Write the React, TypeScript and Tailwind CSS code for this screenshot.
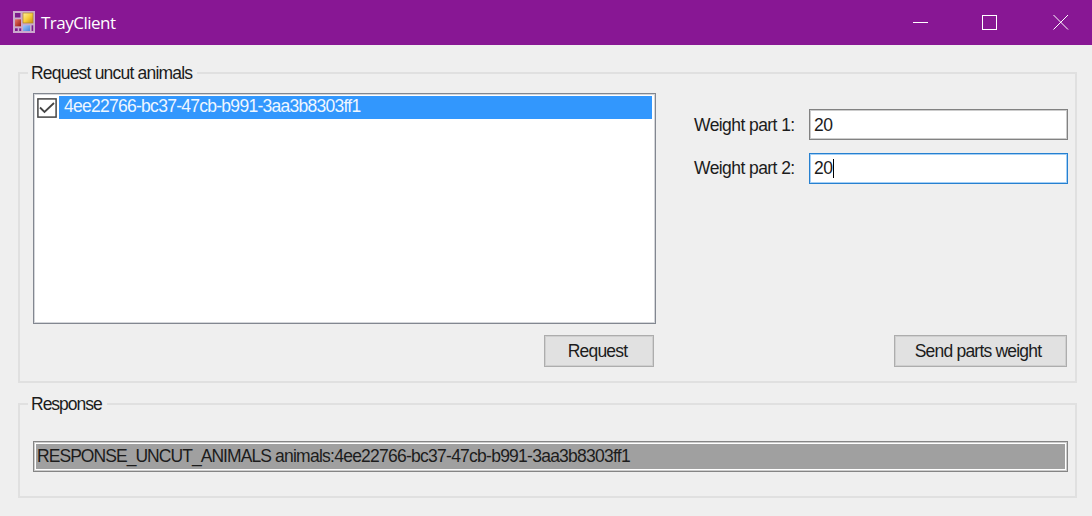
import React from 'react';

const FormIcon = () => (
  <svg width="22" height="22" viewBox="0 0 22 22" className="shrink-0">
    <defs>
      <linearGradient id="gold" x1="0" y1="0" x2="1" y2="1">
        <stop offset="0" stopColor="#fff0a0" />
        <stop offset="0.5" stopColor="#f7cf3c" />
        <stop offset="1" stopColor="#c98c12" />
      </linearGradient>
      <linearGradient id="red" x1="0" y1="0" x2="1" y2="1">
        <stop offset="0" stopColor="#e87868" />
        <stop offset="1" stopColor="#98180c" />
      </linearGradient>
      <linearGradient id="blue" x1="0" y1="0" x2="1" y2="1">
        <stop offset="0" stopColor="#9cc8ff" />
        <stop offset="1" stopColor="#4b86d6" />
      </linearGradient>
    </defs>
    <rect width="22" height="22" fill="#cbaacd" />
    <rect x="2" y="2" width="5.5" height="4.5" fill="#7b1a8c" />
    <rect x="10" y="2" width="10" height="10" fill="url(#gold)" stroke="#b08428" strokeWidth="0.7" />
    <rect x="2" y="8.3" width="6" height="7" fill="url(#red)" />
    <rect x="10" y="14.3" width="7" height="5.7" fill="url(#blue)" />
    <rect x="2" y="17.3" width="2.7" height="2.7" fill="#7b1a8c" />
    <rect x="6.2" y="17.3" width="2" height="2.7" fill="#7b1a8c" />
    <rect x="18.6" y="14.3" width="1.6" height="5.7" fill="#7b1a8c" />
  </svg>
);

export default function App() {
  return (
    <div className="h-[516px] w-[1092px] overflow-hidden bg-[#efefef] font-['Liberation_Sans',Arial,sans-serif] text-[17.5px] leading-5 text-[#1c1c1c]">
      <header className="flex h-[45px] items-center bg-[#881794] pl-[13px] pr-[23px] pb-[2px] text-white">
        <FormIcon />
        <h1 className="ml-[6px] mt-[3px] font-['Open_Sans','Noto_Sans',sans-serif] text-[17px] tracking-[-0.5px]">TrayClient</h1>
        <svg width="156" height="16" viewBox="0 0 156 16" className="ml-auto" fill="none" stroke="#fff" strokeWidth="1">
          <path d="M0 8.5H15" />
          <rect x="69.5" y="1.5" width="14" height="14" />
          <path d="M140.5 1L155 15.5M155 1L140.5 15.5" />
        </svg>
      </header>

      <main className="pl-[18px] pr-[15px] pt-[18px]">
        <fieldset className="h-[320px] border-2 border-[#e0e0e0] pl-[13px]">
          <legend className="ml-[-5px] h-5 w-[169px] whitespace-nowrap pl-[3px] leading-[21px] tracking-[-0.8px]">Request uncut animals</legend>
          <div className="flex pt-[10px]">
            <div className="flex w-[623px] flex-col">
              <div className="h-[231px] border border-[#828790] bg-white pl-[3px] pr-[3px] pt-[2px] shadow-[inset_0_0_0_1px_#d4d6da]">
                <div className="flex h-[23px] items-center">
                  <svg width="20" height="20" viewBox="0 0 20 20" className="mr-[2px] shrink-0" fill="none" stroke="#454545">
                    <rect x="0.9" y="0.9" width="18.2" height="18.2" strokeWidth="1.5" />
                    <path d="M3 9.5L7.5 14L17 5" strokeWidth="1.8" />
                  </svg>
                  <div className="h-[23px] flex-1 whitespace-nowrap bg-[#3297fd] pl-[5px] leading-[21px] tracking-[-0.73px] text-[#eef6ff]">
                    4ee22766-bc37-47cb-b991-3aa3b8303ff1
                  </div>
                </div>
              </div>
              <button className="mr-[2px] mt-[11px] h-8 w-[110px] self-end border border-[#adadad] bg-[#e1e1e1] pr-[3px] tracking-[-0.8px] shadow-[inset_0_0_0_1px_#cfcfcf]">Request</button>
            </div>
            <div className="ml-[38px] flex w-[374px] flex-col pt-4">
              <label className="flex h-[31px] items-center justify-between">
                <span className="whitespace-nowrap tracking-[-0.57px]">Weight part 1:</span>
                <span className="flex h-[31px] w-[259px] items-center border border-[#828282] bg-white pl-1 tracking-[-0.4px] shadow-[inset_0_0_0_1px_#cccccc]">20</span>
              </label>
              <label className="mt-3 flex h-8 items-center justify-between">
                <span className="whitespace-nowrap tracking-[-0.57px]">Weight part 2:</span>
                <span className="flex h-[31px] w-[259px] items-center border border-[#2680d0] bg-white pl-1 tracking-[-0.4px] shadow-[inset_0_0_0_1px_#a4cff5]">
                  20<i className="h-[19px] w-px bg-black" />
                </span>
              </label>
              <button className="mr-[1px] mt-[151px] h-8 w-[173px] self-end whitespace-nowrap border border-[#adadad] bg-[#e1e1e1] pr-[5px] tracking-[-0.8px] shadow-[inset_0_0_0_1px_#cfcfcf]">Send parts weight</button>
            </div>
          </div>
        </fieldset>

        <fieldset className="mt-[11px] h-[104px] border-2 border-[#e0e0e0] pl-[13px]">
          <legend className="ml-[-5px] h-5 w-[79px] whitespace-nowrap pl-[3px] tracking-[-1px]">Response</legend>
          <div className="mt-[27px] h-[31px] w-[1035px] border border-[#858585] bg-white p-[2px] shadow-[inset_0_0_0_1px_#cccccc]">
            <div className="h-full whitespace-nowrap bg-[#a0a0a0] pl-[1px] leading-[24px] tracking-[-0.75px]">
              <span className="tracking-[-0.95px]">RESPONSE_UNCUT_ANIMALS</span> animals:4ee22766-bc37-47cb-b991-3aa3b8303ff1
            </div>
          </div>
        </fieldset>
      </main>
    </div>
  );
}
